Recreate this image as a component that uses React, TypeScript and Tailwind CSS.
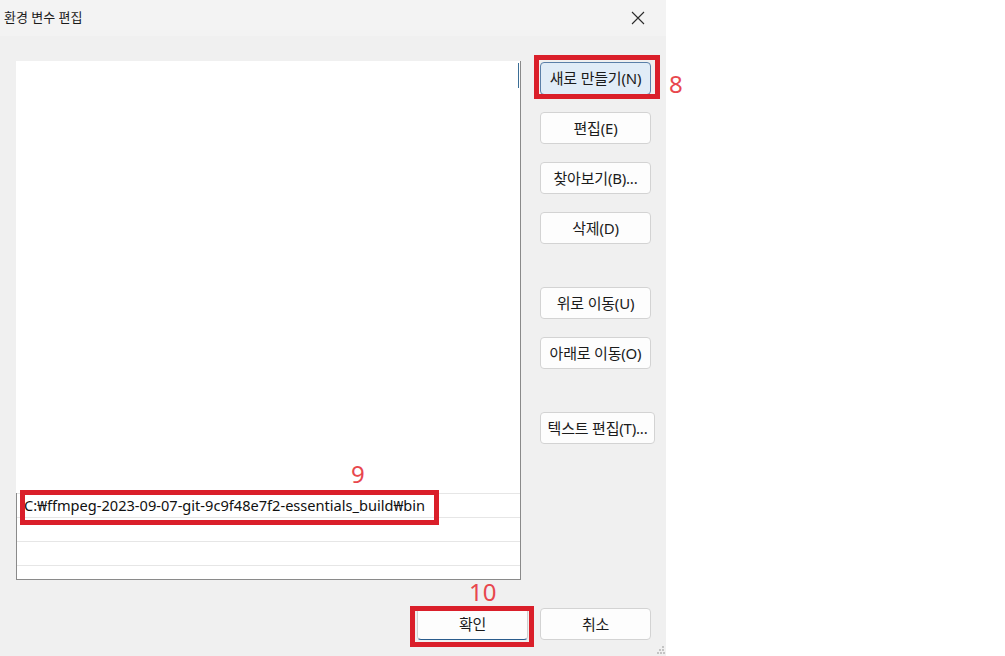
import React from 'react'

const kr = { fontFamily: '"Noto Sans", "Noto Sans CJK KR", sans-serif' }

function Btn({ label, wide, primary, focus, className }: any) {
    return (
        <div
            className={
                'flex h-[32px] shrink-0 items-center justify-center rounded-[4px] border text-[15px] tracking-[-0.2px] text-[#1b1b1b] ' +
                (wide ? 'w-[115px] ' : 'w-[111px] ') +
                (focus
                    ? 'border-[#5b7fa8] bg-[#e1ecf7] '
                    : primary
                        ? 'border-[#d0d0d0] border-b-[#2a5c8c] bg-[#fdfdfd] '
                        : 'border-[#d3d3d3] bg-[#fdfdfd] ') +
                (className || '')
            }
        >
            {label}
        </div>
    )
}

function Mark({ className }: any) {
    return <div className={'pointer-events-none absolute border-[5px] border-[#da1f2a] ' + className}></div>
}

export default function App() {
    let rows = ['', '']

    return (
        <div className="flex h-[656px] w-[1005px] bg-white" style={kr}>
            <div className="flex w-[666px] shrink-0 flex-col bg-[#f0f0f0]">
                {/* title bar */}
                <div className="flex h-[36px] items-center justify-between bg-[#f3f3f3] pl-[4px] pr-[10px]">
                    <span className="text-[13px] text-[#1b1b1b]">환경 변수 편집</span>
                    <svg width="36" height="24" viewBox="0 0 36 24">
                        <path d="M12 6 L24 18 M24 6 L12 18" stroke="#2b2b2b" strokeWidth="1.1" fill="none" />
                    </svg>
                </div>

                <div className="flex flex-1 flex-col pl-[16px]">
                    <div className="mt-[25px] flex">
                        {/* list box */}
                        <div className="relative flex h-[519px] w-[505px] shrink-0 flex-col border-r border-r-[#8a8a8a] bg-white">
                            <div className="absolute right-[1px] top-[2px] h-[25px] w-[1px] bg-[#3b6e96]"></div>
                            <div className="flex-1"></div>
                            <div className="flex flex-col border-b border-l border-[#8a8a8a]">
                                <div className="relative flex h-[24px] items-center border-t border-[#e6e6e6] pl-[7px] text-[14.6px] text-[#111]">
                                    C:₩ffmpeg-2023-09-07-git-9c9f48e7f2-essentials_build₩bin
                                    <Mark className="-top-[4px] left-[3px] h-[35px] w-[419px]" />
                                    <span className="absolute -top-[38px] left-[334px] text-[24px] text-[#e8474d]">9</span>
                                </div>
                                {rows.map((r, i) => (
                                    <div key={i} className="h-[24px] border-t border-[#e6e6e6]">{r}</div>
                                ))}
                                <div className="h-[14px] border-t border-[#e6e6e6]"></div>
                            </div>
                        </div>

                        {/* buttons */}
                        <div className="ml-[19px] flex flex-col">
                            <div className="relative mt-[1px]">
                                <Btn label="새로 만들기(N)" focus className="h-[33px]" />
                                <Mark className="-left-[6px] -right-[5px] -top-[7px] -bottom-[4px]" />
                                <span className="absolute left-[129px] top-[4px] text-[24px] text-[#e8474d]">8</span>
                            </div>
                            <Btn label="편집(E)" className="mt-[17px]" />
                            <Btn label="찾아보기(B)..." className="mt-[18px]" />
                            <Btn label="삭제(D)" className="mt-[18px]" />
                            <Btn label="위로 이동(U)" className="mt-[43px]" />
                            <Btn label="아래로 이동(O)" className="mt-[18px]" />
                            <Btn label="텍스트 편집(T)..." wide className="mt-[43px]" />
                        </div>
                    </div>

                    {/* bottom buttons */}
                    <div className="mt-[28px] flex justify-end gap-[12px] pr-[15px]">
                        <div className="relative">
                            <Btn label="확인" primary className="w-[110px]" />
                            <Mark className="-left-[7px] -right-[6px] -top-[2px] -bottom-[7px]" />
                            <span className="absolute -top-[34px] left-[52px] text-[24px] text-[#e8474d]">10</span>
                        </div>
                        <Btn label="취소" />
                    </div>
                    <div className="flex flex-1 items-end justify-end pb-[2px] pr-[1px]">
                        <svg width="8" height="8" viewBox="0 0 8 8">
                            <rect x="5" y="0" width="2" height="2" fill="#c4c4c4" />
                            <rect x="2" y="3" width="2" height="2" fill="#c4c4c4" />
                            <rect x="5" y="3" width="2" height="2" fill="#c4c4c4" />
                            <rect x="0" y="6" width="2" height="2" fill="#c4c4c4" />
                            <rect x="3" y="6" width="2" height="2" fill="#c4c4c4" />
                            <rect x="6" y="6" width="2" height="2" fill="#c4c4c4" />
                        </svg>
                    </div>
                </div>
            </div>
        </div>
    )
}
